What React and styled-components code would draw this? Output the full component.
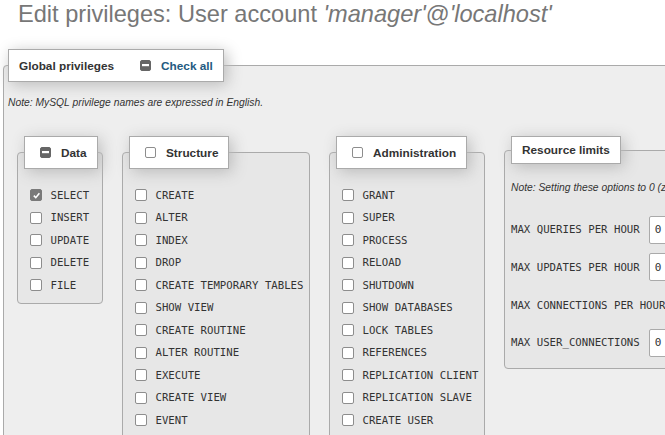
import React from 'react';
import styled, { createGlobalStyle } from 'styled-components';

const GlobalStyle = createGlobalStyle`
  html, body { margin: 0; padding: 0; background: #fff; overflow: hidden; }
  body { font-family: "Liberation Sans", Arial, sans-serif; }
`;

const Page = styled.div`
  padding-left: 3px;
`;

const Title = styled.h2`
  margin: 0 0 0 15px;
  font-size: 23.6px;
  font-weight: normal;
  line-height: 28px;
  color: #777;
  white-space: nowrap;
`;

const Outer = styled.fieldset`
  margin: 21px 0 0;
  padding: 0 10px 20px 4px;
  width: max-content;
  min-width: 0;
  border: 1px solid #aaa;
  border-radius: 4px;
  background: #eee;
`;

const Legend = styled.legend`
  display: flex;
  align-items: center;
  box-sizing: border-box;
  width: max-content;
  height: ${(p) => (p.$tall ? 33 : 28)}px;
  margin: 0;
  padding: 0 10px;
  background: #fff;
  border: 1px solid #aaa;
  box-shadow: 3px 3px 15px #bbb;
  font-size: 11.8px;
  font-weight: bold;
  color: #333;
  white-space: nowrap;
`;

const LegendLink = styled.a`
  display: flex;
  align-items: center;
  gap: 10px;
  margin-left: 26px;
  color: #235a81;
  text-decoration: none;
`;

const LegendLabel = styled.span`
  display: flex;
  flex: none;
  align-items: center;
  gap: 10px;
  padding-left: 5px;
`;

const Note = styled.p`
  margin: ${(p) => p.$top}px 0 0;
  font-size: 10.3px;
  font-style: italic;
  color: #333;
  white-space: nowrap;
`;

const Groups = styled.div`
  display: flex;
  align-items: flex-start;
  gap: 19px;
  margin-top: 28px;
  padding-left: 9px;
`;

const Group = styled.fieldset`
  box-sizing: border-box;
  flex: none;
  width: ${(p) => (p.$width ? `${p.$width}px` : 'max-content')};
  margin: 0;
  padding: 0 7px 6px 6px;
  min-width: 0;
  border: 1px solid #aaa;
  border-radius: 4px;
  background: #e7e7e7;
`;

const List = styled.div`
  margin-top: 15px;
  display: flex;
  flex-direction: column;
`;

const Item = styled.label`
  display: flex;
  align-items: center;
  gap: 8.5px;
  height: 22.5px;
  padding-left: 6px;
  font-family: "DejaVu Sans Mono", "Liberation Mono", monospace;
  font-size: 10.7px;
  color: #333;
  white-space: nowrap;
`;

const Box = styled.span`
  display: inline-flex;
  align-items: center;
  justify-content: center;
  flex: none;
  box-sizing: border-box;
  width: ${(p) => p.$size}px;
  height: ${(p) => p.$size}px;
  border: 1px solid ${(p) => (p.$state === 'off' ? '#8d8d8d' : p.$state === 'on' ? '#7a7a7a' : '#666')};
  border-radius: 2px;
  background: ${(p) => (p.$state === 'off' ? '#fff' : p.$state === 'on' ? '#7a7a7a' : '#666')};
`;

const Limits = styled.div`
  margin-top: 18px;
  display: flex;
  flex-direction: column;
`;

const LimitRow = styled.div`
  display: flex;
  align-items: center;
  gap: 9px;
  height: 37.67px;
  font-family: "DejaVu Sans Mono", "Liberation Mono", monospace;
  font-size: 10.7px;
  color: #333;
  white-space: nowrap;
`;

const NumInput = styled.input`
  box-sizing: border-box;
  width: 130px;
  height: 28px;
  padding: 0 5px;
  border: 1px solid #aaa;
  border-radius: 2px;
  background: #fff;
  font-family: "DejaVu Sans Mono", "Liberation Mono", monospace;
  font-size: 11px;
  color: #333;
`;

function Check({ state = 'off', size = 12 }) {
  return (
    <Box $state={state} $size={size}>
      {state === 'on' && (
        <svg width="9" height="9" viewBox="0 0 10 10">
          <path d="M2 5.2 L4.2 7.4 L8.2 2.6" fill="none" stroke="#fff" strokeWidth="1.8" />
        </svg>
      )}
      {state === 'mixed' && (
        <svg width="7" height="3" viewBox="0 0 7 3">
          <rect x="0" y="0" width="7" height="2.2" fill="#fff" />
        </svg>
      )}
    </Box>
  );
}

const data = [['SELECT', 'on'], ['INSERT'], ['UPDATE'], ['DELETE'], ['FILE']];
const structure = [
  'CREATE', 'ALTER', 'INDEX', 'DROP', 'CREATE TEMPORARY TABLES', 'SHOW VIEW',
  'CREATE ROUTINE', 'ALTER ROUTINE', 'EXECUTE', 'CREATE VIEW', 'EVENT',
];
const admin = [
  'GRANT', 'SUPER', 'PROCESS', 'RELOAD', 'SHUTDOWN', 'SHOW DATABASES', 'LOCK TABLES',
  'REFERENCES', 'REPLICATION CLIENT', 'REPLICATION SLAVE', 'CREATE USER',
];
const limits = [
  'MAX QUERIES PER HOUR', 'MAX UPDATES PER HOUR', 'MAX CONNECTIONS PER HOUR', 'MAX USER_CONNECTIONS',
];

function PrivGroup({ title, state, items, width }) {
  return (
    <Group $width={width}>
      <Legend $tall>
        <LegendLabel>
          <Check state={state} size={11} />
          {title}
        </LegendLabel>
      </Legend>
      <List>
        {items.map(([name, st]) => (
          <Item key={name}>
            <Check state={st || 'off'} />
            {name}
          </Item>
        ))}
      </List>
    </Group>
  );
}

export default function App() {
  return (
    <Page>
      <GlobalStyle />
      <Title>
        Edit privileges: User account <i>'manager'</i>@<i>'localhost'</i>
      </Title>
      <Outer>
        <Legend $tall>
          Global privileges
          <LegendLink href="#">
            <Check state="mixed" size={11} />
            Check all
          </LegendLink>
        </Legend>
        <Note $top={15}>Note: MySQL privilege names are expressed in English.</Note>
        <Groups>
          <PrivGroup title="Data" state="mixed" items={data} width={86} />
          <PrivGroup title="Structure" state="off" items={structure.map((s) => [s])} width={188} />
          <PrivGroup title="Administration" state="off" items={admin.map((s) => [s])} width={156} />
          <Group>
            <Legend>Resource limits</Legend>
            <Note $top={18}>Note: Setting these options to 0 (zero) removes the limit.</Note>
            <Limits>
              {limits.map((l) => (
                <LimitRow key={l}>
                  {l}
                  <NumInput type="text" defaultValue="0" />
                </LimitRow>
              ))}
            </Limits>
          </Group>
        </Groups>
      </Outer>
    </Page>
  );
}
